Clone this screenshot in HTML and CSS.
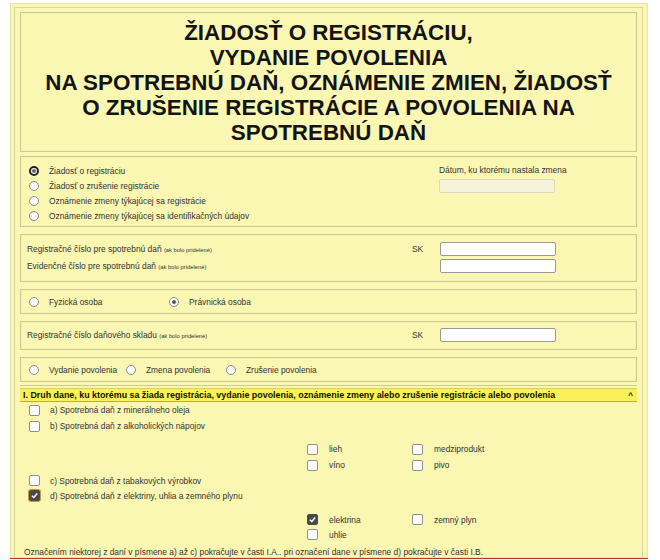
FILE: index.html
```html
<!DOCTYPE html>
<html>
<head>
    <title>Žiadosť o registráciu</title>
    <link rel="stylesheet" href="styles.css">
</head>
<body>
    <div class="page">
        <div class="frame">
            <div class="frame-in">
                <div class="box title-box">
                    <h1>ŽIADOSŤ O REGISTRÁCIU,<br>VYDANIE POVOLENIA<br>NA SPOTREBNÚ DAŇ, OZNÁMENIE ZMIEN, ŽIADOSŤ<br>O ZRUŠENIE REGISTRÁCIE A POVOLENIA NA<br>SPOTREBNÚ DAŇ</h1>
                </div>

                <div class="box sec-type">
                    <div class="radio-list">
                        <div class="opt"><span class="radio focus"></span>Žiadosť o registráciu</div>
                        <div class="opt"><span class="radio"></span>Žiadosť o zrušenie registrácie</div>
                        <div class="opt"><span class="radio"></span>Oznámenie zmeny týkajúcej sa registrácie</div>
                        <div class="opt"><span class="radio"></span>Oznámenie zmeny týkajúcej sa identifikačných údajov</div>
                    </div>
                    <div class="date-field">
                        <div class="date-label">Dátum, ku ktorému nastala zmena</div>
                        <div class="field disabled"></div>
                    </div>
                </div>

                <div class="box sec-num">
                    <div class="num-row">
                        <span class="num-label">Registračné číslo pre spotrebnú daň <small>(ak bolo pridelené)</small></span>
                        <span class="sk">SK</span>
                        <span class="field"></span>
                    </div>
                    <div class="num-row">
                        <span class="num-label">Evidenčné číslo pre spotrebnú daň <small>(ak bolo pridelené)</small></span>
                        <span class="sk"></span>
                        <span class="field"></span>
                    </div>
                </div>

                <div class="box sec-inline">
                    <div class="opt w-140"><span class="radio"></span>Fyzická osoba</div>
                    <div class="opt"><span class="radio on"></span>Právnická osoba</div>
                </div>

                <div class="box sec-num single">
                    <div class="num-row">
                        <span class="num-label">Registračné číslo daňového skladu <small>(ak bolo pridelené)</small></span>
                        <span class="sk">SK</span>
                        <span class="field"></span>
                    </div>
                </div>

                <div class="box sec-inline last">
                    <div class="opt w-97"><span class="radio"></span>Vydanie povolenia</div>
                    <div class="opt w-100"><span class="radio"></span>Zmena povolenia</div>
                    <div class="opt"><span class="radio"></span>Zrušenie povolenia</div>
                </div>

                <div class="sec-tax">
                    <div class="bar">
                        <span>I. Druh dane, ku ktorému sa žiada registrácia, vydanie povolenia, oznámenie zmeny alebo zrušenie registrácie alebo povolenia</span>
                        <span class="caret">^</span>
                    </div>
                    <div class="tax-body">
                        <div class="cb-row"><span class="cb"></span>a) Spotrebná daň z minerálneho oleja</div>
                        <div class="cb-row"><span class="cb"></span>b) Spotrebná daň z alkoholických nápojov</div>
                        <div class="sub">
                            <div class="cb-row"><span class="cb"></span>lieh</div>
                            <div class="cb-row"><span class="cb"></span>medziprodukt</div>
                            <div class="cb-row"><span class="cb"></span>víno</div>
                            <div class="cb-row"><span class="cb"></span>pivo</div>
                        </div>
                        <div class="cb-row tight"><span class="cb"></span>c) Spotrebná daň z tabakových výrobkov</div>
                        <div class="cb-row tight"><span class="cb on focus"><svg viewBox="0 0 10 10"><path d="M2 5.2 L4.2 7.3 L8 2.8" fill="none" stroke="#fff" stroke-width="1.6"/></svg></span>d) Spotrebná daň z elektriny, uhlia a zemného plynu</div>
                        <div class="sub">
                            <div class="cb-row tight"><span class="cb on"><svg viewBox="0 0 10 10"><path d="M2 5.2 L4.2 7.3 L8 2.8" fill="none" stroke="#fff" stroke-width="1.6"/></svg></span>elektrina</div>
                            <div class="cb-row tight"><span class="cb"></span>zemný plyn</div>
                            <div class="cb-row tight"><span class="cb"></span>uhlie</div>
                        </div>
                        <p class="note">Označením niektorej z daní v písmene a) až c) pokračujte v časti I.A.. pri označení dane v písmene d) pokračujte v časti I.B.</p>
                    </div>
                </div>
            </div>
        </div>
        <div class="next"></div>
    </div>
</body>
</html>
```
FILE: styles.css
```css
body { margin: 0; background: #fff; font-family: "Liberation Sans", Arial, sans-serif; color: #333; }
.page { width: 638px; margin: 3px 0 0 10px; }
.frame { border: 1px solid #e9e5a8; background: #faf7b3; padding: 3px 2px 0 3px; }
.frame-in { border: 1px solid #d8d49a; border-bottom: none; padding: 4px 5px 0 5px; margin-right: 2px; }
.box { border: 1px solid #cdc993; box-shadow: inset 0 0 0 1px #f4f0ad; margin-bottom: 7px; }
.box.last { margin-bottom: 3px; }

.title-box { padding: 7px 0 6px; margin-bottom: 4px; }
h1 { margin: 0; text-align: center; font-size: 22.4px; line-height: 25px; font-weight: bold; color: #141414; }

.opt { display: flex; align-items: center; height: 15px; font-size: 8.4px; color: #333; }
.radio { width: 8px; height: 8px; border: 1px solid #8a8a8a; border-radius: 50%; background: #fff; margin: 0 10px 0 0; flex: none; position: relative; }
.radio.on::after { content: ""; position: absolute; left: 2px; top: 2px; width: 4px; height: 4px; border-radius: 50%; background: #555; }
.radio.focus { border: 2px solid #222; width: 6px; height: 6px; }
.radio.focus::after { content: ""; position: absolute; left: 1px; top: 1px; width: 4px; height: 4px; border-radius: 50%; background: #666; }

.sec-type { display: flex; padding: 6px 8px 3px; margin-bottom: 7px; }
.radio-list { width: 410px; }
.date-label { font-size: 8.4px; height: 15px; line-height: 15px; }
.date-field .field { margin-top: 1px; }

.field { display: block; width: 114px; height: 12px; border: 1px solid #999; border-radius: 2px; background: #fff; }
.field.disabled { background: #f5f3d8; border-color: #d8d6c0; }

.sec-num { padding: 5px 0 7px 6px; }
.sec-num.single { padding: 4px 0 6px 6px; }
.num-row { display: flex; align-items: center; height: 17px; font-size: 8.4px; }
.num-label { width: 385px; }
.num-label small { font-size: 5.8px; }
.sk { width: 28px; }

.sec-inline { display: flex; padding: 5px 8px; height: 13px; align-items: center; }
.sec-inline .opt { height: 13px; }
.w-140 { width: 140px; }
.w-97 { width: 97px; }
.w-100 { width: 100px; }

.sec-tax { border-top: 1px solid #cdc993; padding-top: 3px; }
.bar { display: flex; justify-content: space-between; align-items: center; height: 12px; padding: 0 4px 0 3px; background: #f9f05a; border-bottom: 1px solid #bcae3e; box-shadow: 0 -1px 0 #d9cf58; font-size: 8.9px; font-weight: bold; color: #111; }
.caret { font-size: 8px; }
.tax-body { padding: 0 0 0 9px; }
.cb-row { display: flex; align-items: center; height: 16px; font-size: 8.4px; color: #333; }
.cb-row.tight { height: 15px; }
.cb { width: 9px; height: 9px; border: 1px solid #8f8f8f; border-radius: 2px; background: #fff; margin-right: 10px; flex: none; display: flex; }
.sub .cb { margin-right: 11px; }
.cb.on { background: #4a4a4a; border-color: #4a4a4a; }
.cb.focus { box-shadow: 0 0 0 1px #c69a3c; }
.cb svg { width: 9px; height: 9px; }
.sub { display: grid; grid-template-columns: 105px 105px; margin: 7px 0 0 278px; }
.cb-row.tight + .sub { margin-top: 9px; }
.note { margin: 5px 0 0 -5px; font-size: 8.4px; height: 10px; line-height: 10px; }

.next { border-top: 1px solid #b33a24; height: 10px; }
```
